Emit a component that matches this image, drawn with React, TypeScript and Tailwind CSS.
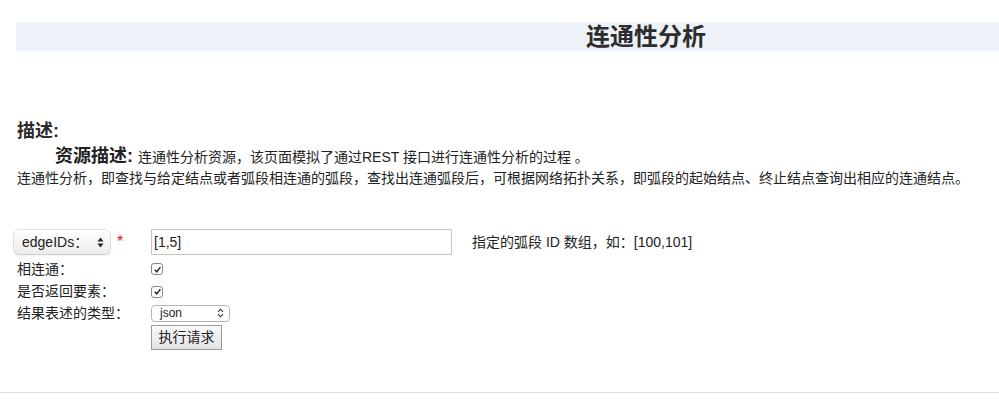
import React from "react";

const font = { fontFamily: '"Liberation Sans", "Noto Sans CJK SC", sans-serif' };

function Check() {
  return (
    <span className="inline-flex h-[12px] w-[12px] items-center justify-center rounded-[3px] border border-[#8a8a8a] bg-white">
      <svg width="9" height="9" viewBox="0 0 10 10">
        <path d="M2 5.2 L4.2 7.6 L8.2 2.4" fill="none" stroke="#222" strokeWidth="1.6" />
      </svg>
    </span>
  );
}

export default function App() {
  return (
    <div className="bg-white text-[#333]" style={font}>
      <div className="ml-4 mt-[22px] h-[29px] bg-[#edf1f8] pl-[570px] text-[24px] font-bold leading-[29px] text-[#2d2d2d]">
        连通性分析
      </div>

      <div className="mt-[68px] pl-[17px]">
        <div className="text-[18px] font-bold leading-[24px] text-[#2b2b2b]">描述:</div>
        <div className="mt-[1px] pl-[38px] text-[14px] leading-[24px] text-[#222]">
          <span className="text-[18px] font-bold">资源描述: </span>
          连通性分析资源，该页面模拟了通过REST 接口进行连通性分析的过程 。
        </div>
        <div className="-mt-[1px] text-[14px] leading-[20px] text-[#222]">
          连通性分析，即查找与给定结点或者弧段相连通的弧段，查找出连通弧段后，可根据网络拓扑关系，即弧段的起始结点、终止结点查询出相应的连通结点。
        </div>
      </div>

      <div className="mt-[41px] grid grid-cols-[137px_321px_1fr] pl-[14px] text-[14px] text-[#222]">
        <div className="flex h-[26px] items-center">
          <div className="flex h-[24px] w-[96px] items-center justify-between rounded-[5px] bg-gradient-to-b from-[#ffffff] to-[#ececec] pl-[8px] pr-[6px] shadow-[0_0_0_0.5px_#c8c8c8,0_1px_2px_rgba(0,0,0,0.2)]">
            <span>edgeIDs：</span>
            <svg width="7" height="11" viewBox="0 0 7 11">
              <path d="M3.5 0.5 L6.5 4.5 L0.5 4.5 Z" fill="#222" />
              <path d="M3.5 10.5 L6.5 6.5 L0.5 6.5 Z" fill="#222" />
            </svg>
          </div>
          <span className="ml-[7px] text-[16px] leading-none text-[#e8141b]">*</span>
        </div>
        <div className="flex h-[26px] items-center">
          <div className="flex h-[26px] w-[301px] items-center border border-[#c4c4c4] bg-white px-[2px] text-[14px]">
            [1,5]
          </div>
        </div>
        <div className="flex h-[26px] items-center text-[14px]">指定的弧段 ID 数组，如：[100,101]</div>

        <div className="mt-[2px] flex h-[24px] items-center pl-[3px]">相连通：</div>
        <div className="mt-[2px] flex h-[24px] items-center"><Check /></div>
        <div />

        <div className="flex h-[21px] items-center pl-[3px]">是否返回要素：</div>
        <div className="flex h-[21px] items-center"><Check /></div>
        <div />

        <div className="flex h-[22px] items-center pl-[3px]">结果表述的类型：</div>
        <div className="flex h-[22px] items-center">
          <div className="flex h-[17px] w-[79px] items-center justify-between rounded-[4px] border border-[#b5b5b5] bg-white pl-[8px] pr-[5px] text-[12px]">
            <span>json</span>
            <svg width="7" height="10" viewBox="0 0 7 10">
              <path d="M1 3.8 L3.5 1.2 L6 3.8 M1 6.2 L3.5 8.8 L6 6.2" fill="none" stroke="#333" strokeWidth="1.1" />
            </svg>
          </div>
        </div>
        <div />

        <div />
        <div className="pt-[1px]">
          <button className="h-[25px] w-[71px] border border-[#9a9a9a] bg-gradient-to-b from-[#fafafa] to-[#e3e3e3] text-[14px] text-[#222]">
            执行请求
          </button>
        </div>
        <div />
      </div>

      <div className="mt-[42px] border-t border-[#dddddd]" />
    </div>
  );
}
